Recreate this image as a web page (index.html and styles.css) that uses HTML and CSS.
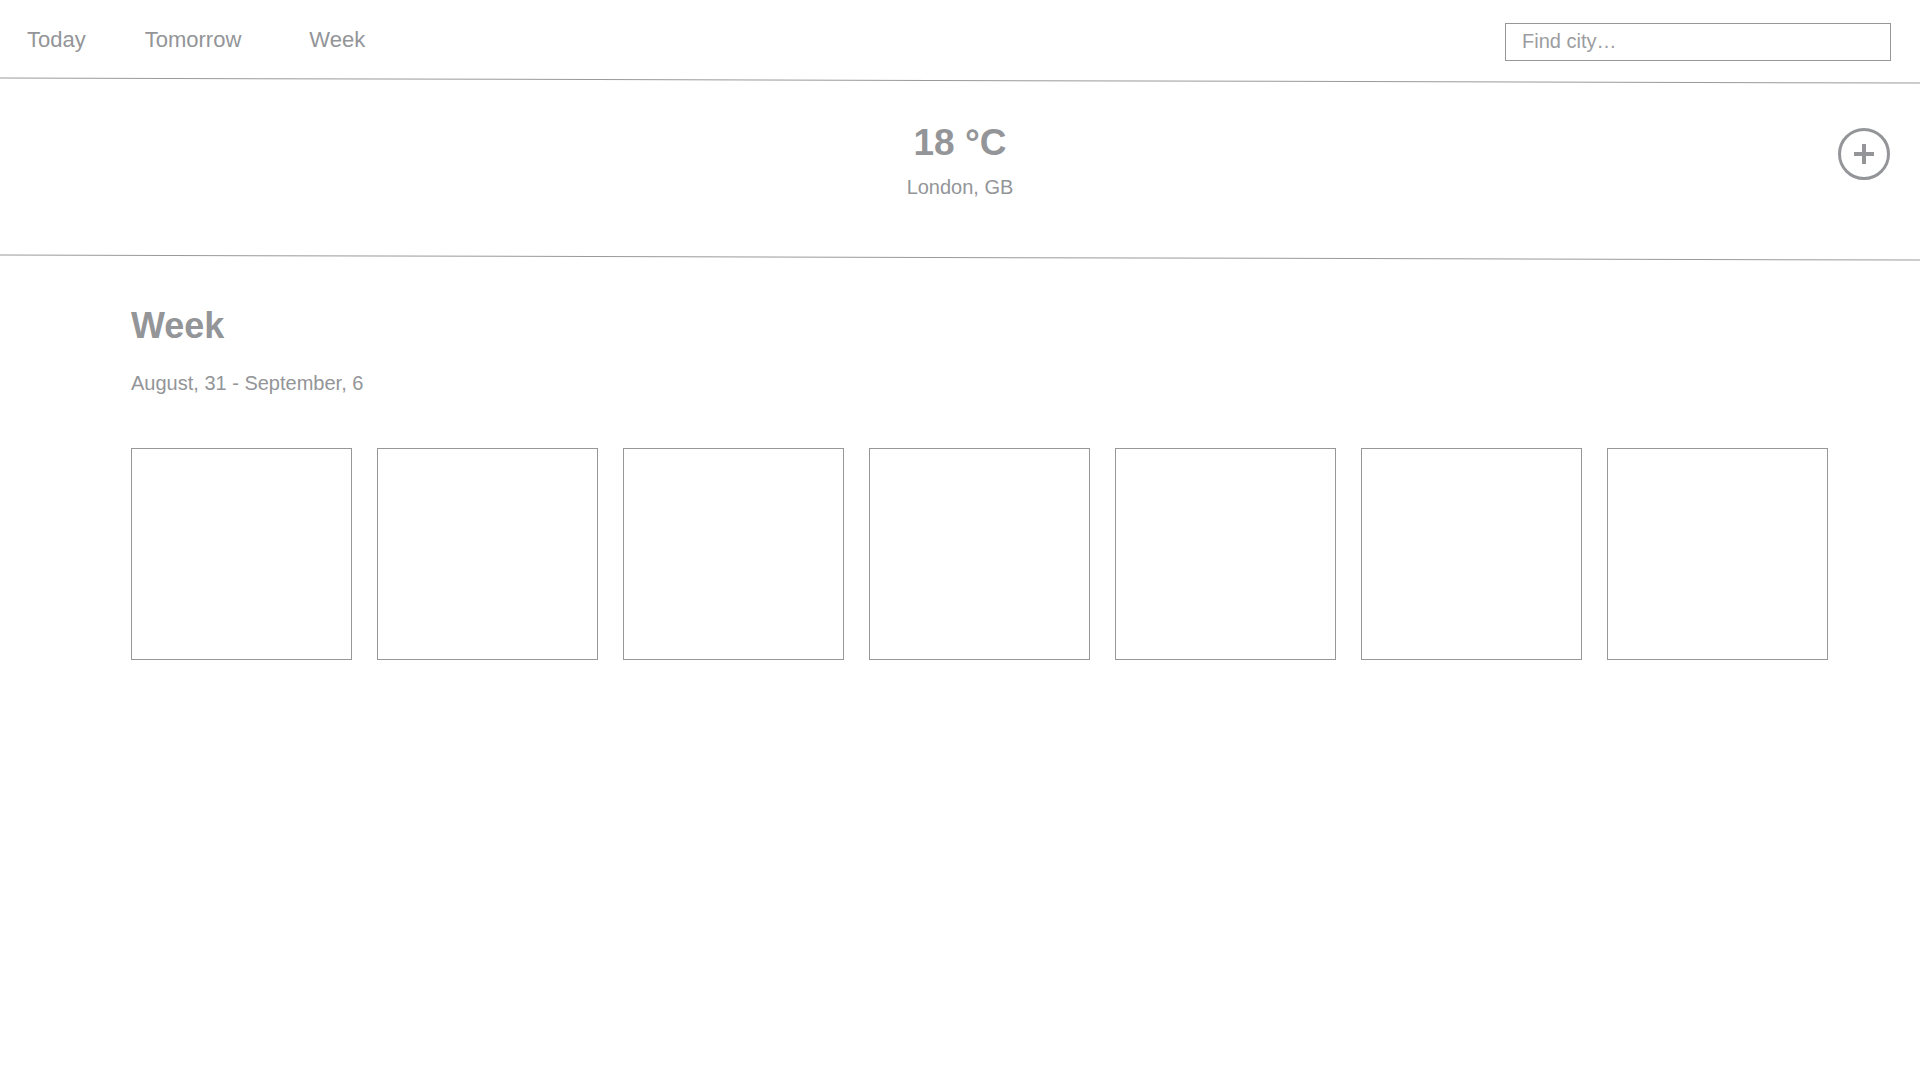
FILE: index.html
```html
<!DOCTYPE html>
<html lang="en">
<head>
<meta charset="utf-8">
<title>Weather</title>
<link rel="stylesheet" href="styles.css">
</head>
<body>
<header class="topbar">
  <nav class="tabs">
    <a class="tab tab-today" href="#">Today</a>
    <a class="tab tab-tomorrow" href="#">Tomorrow</a>
    <a class="tab tab-week" href="#">Week</a>
  </nav>
  <input class="search" type="text" placeholder="Find city…">
</header>
<div class="divider"></div>
<section class="current">
  <div class="current-spacer"></div>
  <div class="current-info">
    <div class="temp">18 °C</div>
    <div class="city">London, GB</div>
  </div>
  <button class="add" aria-label="Add city">
    <svg width="54" height="54" viewBox="0 0 54 54">
      <circle cx="27" cy="27" r="24.5" fill="none" stroke="#939598" stroke-width="3"/>
      <path d="M27 17V37M17 27H37" stroke="#939598" stroke-width="4" fill="none"/>
    </svg>
  </button>
</section>
<div class="divider"></div>
<main class="week">
  <h1 class="week-title">Week</h1>
  <p class="week-range">August, 31 - September, 6</p>
  <div class="days">
    <div class="day"></div>
    <div class="day"></div>
    <div class="day"></div>
    <div class="day"></div>
    <div class="day"></div>
    <div class="day"></div>
    <div class="day"></div>
  </div>
</main>
</body>
</html>
```
FILE: styles.css
```css
html, body {
  margin: 0;
  padding: 0;
  background: #ffffff;
}
body {
  font-family: "Liberation Sans", Arial, Helvetica, sans-serif;
  color: #939598;
  width: 1920px;
  overflow: hidden;
}
.topbar {
  height: 80px;
  display: flex;
  align-items: center;
  justify-content: space-between;
  padding: 0 29px 0 27px;
  box-sizing: border-box;
}
.tabs {
  display: flex;
  margin-top: -1px;
}
.tab {
  font-size: 22px;
  line-height: 22px;
  color: #939598;
  text-decoration: none;
}
.tab-today {
  margin-right: 59px;
}
.tab-tomorrow {
  margin-right: 68px;
}
.search {
  width: 386px;
  height: 38px;
  box-sizing: border-box;
  border: 1px solid #979797;
  border-radius: 0;
  padding: 0 16px;
  font-family: "Liberation Sans", Arial, sans-serif;
  font-size: 20px;
  color: #939598;
  outline: none;
  margin-top: 3px;
}
.search::placeholder {
  color: #9b9c9f;
}
.divider {
  height: 1px;
  background: #9a9a9a;
  transform: rotate(0.15deg);
}
.current {
  height: 176px;
  display: grid;
  grid-template-columns: 1fr auto 1fr;
  align-items: start;
  padding: 43px 29px 0 29px;
  box-sizing: border-box;
}
.current-info {
  display: flex;
  flex-direction: column;
  align-items: center;
  gap: 16px;
}
.temp {
  font-size: 37px;
  line-height: 38px;
  font-weight: 700;
}
.city {
  font-size: 20px;
  line-height: 19px;
}
.add {
  justify-self: end;
  margin-top: 3px;
  padding: 0;
  border: 0;
  background: none;
  width: 54px;
  height: 54px;
  cursor: pointer;
}
.add svg {
  display: block;
}
.week {
  padding: 50px 0 0 131px;
}
.week-title {
  margin: 0;
  font-size: 36px;
  line-height: 36px;
  font-weight: 700;
}
.week-range {
  margin: 29px 0 0;
  font-size: 20px;
  line-height: 20px;
}
.days {
  display: flex;
  gap: 25px;
  margin-top: 55px;
}
.day {
  width: 221px;
  height: 212px;
  box-sizing: border-box;
  border: 1px solid #979797;
}
```
